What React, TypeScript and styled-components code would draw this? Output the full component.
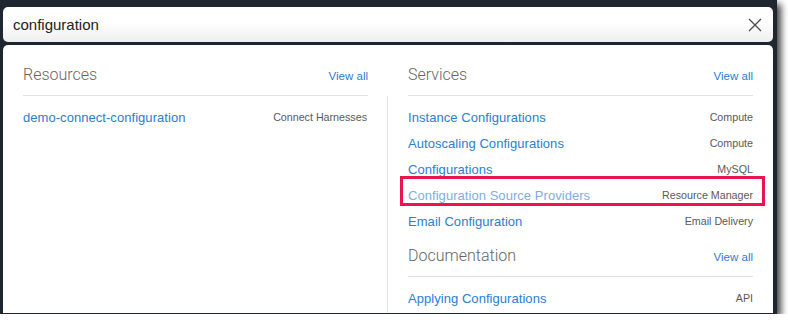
import React from "react";
import styled, { createGlobalStyle } from "styled-components";

const GlobalStyle = createGlobalStyle`
  html, body {
    margin: 0;
    padding: 0;
    background: #ffffff;
  }
  body {
    font-family: "Liberation Sans", Arial, sans-serif;
  }
`;

interface ResultRow {
  label: string;
  tag: string;
  faded?: boolean;
  marked?: boolean;
}

const resources: ResultRow[] = [
  { label: "demo-connect-configuration", tag: "Connect Harnesses" },
];

const services: ResultRow[] = [
  { label: "Instance Configurations", tag: "Compute" },
  { label: "Autoscaling Configurations", tag: "Compute" },
  { label: "Configurations", tag: "MySQL" },
  { label: "Configuration Source Providers", tag: "Resource Manager", faded: true, marked: true },
  { label: "Email Configuration", tag: "Email Delivery" },
];

const docs: ResultRow[] = [
  { label: "Applying Configurations", tag: "API" },
];

// the dark window frame around the search box and its dropdown
const Frame = styled.div`
  width: 777px;
  height: 314px;
  box-sizing: border-box;
  padding: 7px 4px 1px 3px;
  background: #1d2631;
  display: flex;
  flex-direction: column;
  gap: 3px;
  box-shadow: 4px 4px 7px rgba(0, 0, 0, 0.75);
`;

const SearchBar = styled.div`
  height: 35px;
  flex-shrink: 0;
  box-sizing: border-box;
  padding: 0 10px;
  border-radius: 5px;
  background: linear-gradient(#ffffff 45%, #eeeeee);
  display: flex;
  align-items: center;
  justify-content: space-between;
`;

const Query = styled.span`
  font-size: 15px;
  color: #222;
`;

const CloseButton = styled.button`
  border: none;
  background: none;
  padding: 0;
  width: 14px;
  height: 14px;
  display: flex;
  margin-right: 1px;
`;

const Panel = styled.div`
  flex: 1;
  background: #fff;
  border-radius: 5px 5px 0 0;
  padding-top: 20px;
  display: grid;
  grid-template-columns: 385px 1fr;
  overflow: hidden;
`;

const Column = styled.div`
  display: flex;
  flex-direction: column;
  min-width: 0;
`;

const SectionHeader = styled.div<{ $inset?: boolean }>`
  display: flex;
  justify-content: space-between;
  align-items: baseline;
  line-height: 20px;
  margin: ${(p) => (p.$inset ? "0 20px" : "0")};
  padding-bottom: 9px;
  border-bottom: 1px solid #e1e1e1;
`;

const Title = styled.h3`
  margin: 0;
  font-family: Roboto, "Liberation Sans", sans-serif;
  font-weight: 300;
  font-size: 16px;
  color: #666;
`;

const ViewAll = styled.a`
  font-size: 11.5px;
  color: #2a7dd3;
  text-decoration: none;
`;

const Body = styled.div<{ $divider?: boolean }>`
  flex: 1;
  padding: 8px 20px 0;
  border-right: ${(p) => (p.$divider ? "1px solid #e6e6e6" : "none")};
`;

const Section = styled.div`
  margin-top: 12px;
`;

const List = styled.div<{ $gap?: boolean }>`
  display: flex;
  flex-direction: column;
  padding-top: ${(p) => (p.$gap ? "8px" : "0")};
`;

const Row = styled.div`
  position: relative;
  height: 26px;
  display: flex;
  align-items: center;
  justify-content: space-between;
`;

const Link = styled.a<{ $faded?: boolean }>`
  font-size: 13px;
  letter-spacing: 0.05px;
  color: ${(p) => (p.$faded ? "#7fade4" : "#2a7dd3")};
  text-decoration: none;
`;

const Tag = styled.span`
  font-size: 10.7px;
  color: #595959;
`;

// red annotation box drawn over a result
const Highlight = styled.span`
  position: absolute;
  top: -6px;
  left: -8px;
  right: -12px;
  height: 30px;
  box-sizing: border-box;
  border: 3px solid #ea1550;
  pointer-events: none;
`;

function Results({ rows }: { rows: ResultRow[] }) {
  return (
    <>
      {rows.map((r) => (
        <Row key={r.label}>
          <Link href="#" $faded={r.faded}>{r.label}</Link>
          <Tag>{r.tag}</Tag>
          {r.marked && <Highlight />}
        </Row>
      ))}
    </>
  );
}

export default function App() {
  return (
    <>
      <GlobalStyle />
      <Frame>
        <SearchBar>
          <Query>configuration</Query>
          <CloseButton aria-label="Clear">
            <svg width="14" height="14" viewBox="0 0 14 14">
              <path d="M1 1 L13 13 M13 1 L1 13" stroke="#4a4a4a" strokeWidth="1.3" fill="none" />
            </svg>
          </CloseButton>
        </SearchBar>
        <Panel>
          <Column>
            <SectionHeader $inset>
              <Title>Resources</Title>
              <ViewAll href="#">View all</ViewAll>
            </SectionHeader>
            <Body $divider>
              <Results rows={resources} />
            </Body>
          </Column>
          <Column>
            <SectionHeader $inset>
              <Title>Services</Title>
              <ViewAll href="#">View all</ViewAll>
            </SectionHeader>
            <Body>
              <List>
                <Results rows={services} />
              </List>
              <Section>
                <SectionHeader>
                  <Title>Documentation</Title>
                  <ViewAll href="#">View all</ViewAll>
                </SectionHeader>
                <List $gap>
                  <Results rows={docs} />
                </List>
              </Section>
            </Body>
          </Column>
        </Panel>
      </Frame>
    </>
  );
}
